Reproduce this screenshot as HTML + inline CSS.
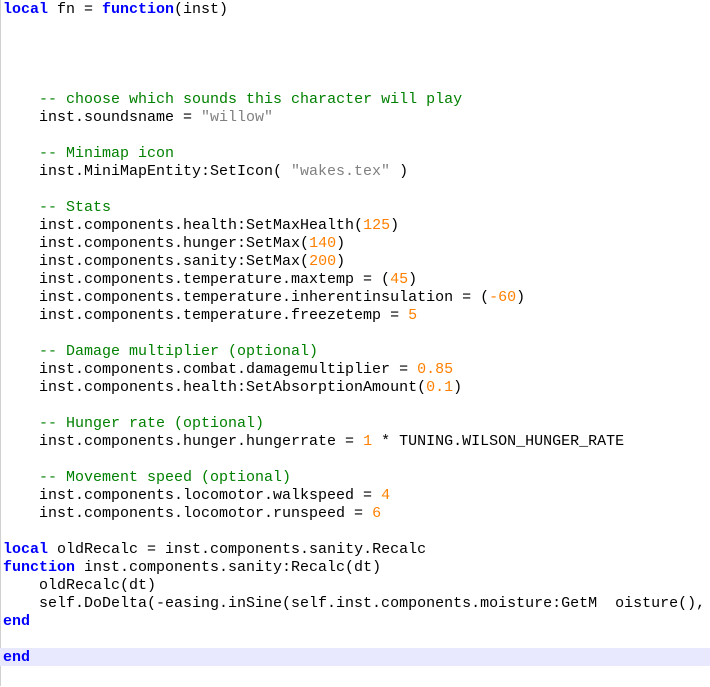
<!DOCTYPE html>
<html><head><meta charset="utf-8"><style>
html,body{margin:0;padding:0;background:#fff;width:710px;height:686px;overflow:hidden}
#ed{position:absolute;left:0;top:1px;width:710px;height:686px;}
#bd{position:absolute;left:0;top:0;width:1px;height:686px;background:#d0d0d0}
.l{position:relative;height:18px;line-height:18px;padding-left:3px;white-space:pre;font-family:"Liberation Mono","Courier New",monospace;font-size:15px;color:#000;}
.hl{background:#e8e8ff;margin-top:-1px;padding-top:1px;height:17px;line-height:17px}
.k{color:#0000ff;font-weight:bold}
.c{color:#008000}
.s{color:#808080}
.n{color:#ff8000}
</style></head><body><div id="bd"></div><div id="ed">
<div class="l"><span class="k">local</span> fn = <span class="k">function</span>(inst)</div>
<div class="l"> </div>
<div class="l"> </div>
<div class="l"> </div>
<div class="l"> </div>
<div class="l">    <span class="c">-- choose which sounds this character will play</span></div>
<div class="l">    inst.soundsname = <span class="s">"willow"</span></div>
<div class="l"> </div>
<div class="l">    <span class="c">-- Minimap icon</span></div>
<div class="l">    inst.MiniMapEntity:SetIcon( <span class="s">"wakes.tex"</span> )</div>
<div class="l"> </div>
<div class="l">    <span class="c">-- Stats</span></div>
<div class="l">    inst.components.health:SetMaxHealth(<span class="n">125</span>)</div>
<div class="l">    inst.components.hunger:SetMax(<span class="n">140</span>)</div>
<div class="l">    inst.components.sanity:SetMax(<span class="n">200</span>)</div>
<div class="l">    inst.components.temperature.maxtemp = (<span class="n">45</span>)</div>
<div class="l">    inst.components.temperature.inherentinsulation = (<span class="n">-60</span>)</div>
<div class="l">    inst.components.temperature.freezetemp = <span class="n">5</span></div>
<div class="l"> </div>
<div class="l">    <span class="c">-- Damage multiplier (optional)</span></div>
<div class="l">    inst.components.combat.damagemultiplier = <span class="n">0.85</span></div>
<div class="l">    inst.components.health:SetAbsorptionAmount(<span class="n">0.1</span>)</div>
<div class="l"> </div>
<div class="l">    <span class="c">-- Hunger rate (optional)</span></div>
<div class="l">    inst.components.hunger.hungerrate = <span class="n">1</span> * TUNING.WILSON_HUNGER_RATE</div>
<div class="l"> </div>
<div class="l">    <span class="c">-- Movement speed (optional)</span></div>
<div class="l">    inst.components.locomotor.walkspeed = <span class="n">4</span></div>
<div class="l">    inst.components.locomotor.runspeed = <span class="n">6</span></div>
<div class="l"> </div>
<div class="l"><span class="k">local</span> oldRecalc = inst.components.sanity.Recalc</div>
<div class="l"><span class="k">function</span> inst.components.sanity:Recalc(dt)</div>
<div class="l">    oldRecalc(dt)</div>
<div class="l">    self.DoDelta(-easing.inSine(self.inst.components.moisture:GetM  oisture(),</div>
<div class="l"><span class="k">end</span></div>
<div class="l"> </div>
<div class="l hl"><span class="k">end</span></div>
<div class="l"> </div>
</div></body></html>
